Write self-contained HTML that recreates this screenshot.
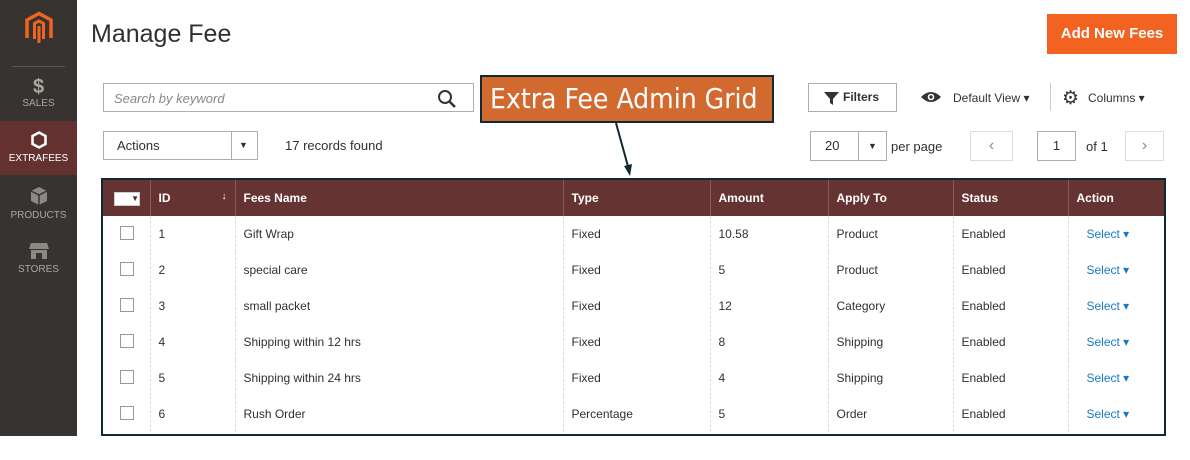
<!DOCTYPE html><html><head><style>
body{margin:0;width:1190px;height:460px;background:#fff;font-family:"Liberation Sans",sans-serif;position:relative;overflow:hidden;color:#303030}
.a{position:absolute}
.sb{left:0;top:0;width:77px;height:436px;background:#373330}
.nav{position:absolute;left:0;width:77px;text-align:center;color:#aaa6a0;font-size:10px}
.nav .i{font-size:20px;font-weight:bold;color:#aaa6a0;display:block;height:22px}
table{border-collapse:collapse;font-size:12px}
th{background:#663333;color:#fff;text-align:left;font-weight:bold;height:36px;padding:0 8px;border-left:1px solid #8a5a58}
td{height:36px;padding:0 8px;border-left:1px dashed #ddd}
tr td:first-child,tr th:first-child{border-left:none}
.cb{display:inline-block;width:12px;height:12px;border:1px solid #999;background:#fff}
.sel{color:#1979c3}
.btn{border:1px solid #adadad;background:#fff;box-sizing:border-box}
</style></head><body>
<div class="a sb"></div>
<svg class="a" style="left:24px;top:11px" width="30" height="36" viewBox="0 0 30 36"><path d="M3 27V9L15 2.5L27 9V27" fill="none" stroke="#f26322" stroke-width="3.5"/><path d="M10.5 28V12.5L15 10L19.5 12.5V28" fill="none" stroke="#f26322" stroke-width="3"/><path d="M15 15V32" stroke="#f26322" stroke-width="3"/></svg>
<div class="a" style="left:12px;top:66px;width:53px;height:1px;background:#5a5653"></div>
<div class="nav" style="top:76px"><span class="i">$</span>SALES</div>
<div class="a" style="left:0;top:121px;width:77px;height:54px;background:#633230"></div>
<div class="nav" style="top:131px;color:#fff"><svg width="16" height="18" viewBox="0 0 16 18" style="display:block;margin:0 auto 4px"><path d="M8 1.5L14.5 5V13L8 16.5L1.5 13V5Z" fill="none" stroke="#fff" stroke-width="2.5"/></svg>EXTRAFEES</div>
<div class="nav" style="top:186px"><svg width="18" height="20" viewBox="0 0 18 20" style="display:block;margin:0 auto 4px"><path d="M9 1L17 5V15L9 19L1 15V5Z" fill="#8c8883"/><path d="M1 5L9 9L17 5M9 9V19" stroke="#373330" stroke-width="1.5" fill="none"/></svg>PRODUCTS</div>
<div class="nav" style="top:242px"><svg width="22" height="18" viewBox="0 0 22 18" style="display:block;margin:0 auto 4px"><path d="M3 1H19L21 7H1Z" fill="#8c8883"/><rect x="3" y="8" width="16" height="9" fill="#8c8883"/><rect x="8" y="11" width="6" height="6" fill="#373330"/></svg>STORES</div>
<div class="a" style="left:91px;top:20px;font-size:25px;color:#303030">Manage Fee</div>
<div class="a" style="left:1047px;top:14px;width:130px;height:40px;background:#f26322;color:#fff;font-size:15px;font-weight:bold;text-align:center;line-height:40px">Add New Fees</div>
<div class="a btn" style="left:103px;top:83px;width:371px;height:29px"><span style="position:absolute;left:10px;top:7px;font-size:13px;font-style:italic;color:#888">Search by keyword</span>
<svg style="position:absolute;right:16px;top:5px" width="20" height="20" viewBox="0 0 20 20"><circle cx="8" cy="8" r="6" fill="none" stroke="#333" stroke-width="2"/><path d="M12.5 12.5L18 18" stroke="#333" stroke-width="2.5"/></svg></div>
<div class="a" style="left:480px;top:75px;width:294px;height:48px;background:#d2692f;border:2px solid #0f2a33;box-sizing:border-box;color:#fff;font-size:28px;line-height:44px;padding-left:8px;font-family:'DejaVu Sans Condensed','Liberation Sans Narrow',sans-serif">Extra Fee Admin Grid</div>
<svg class="a" style="left:605px;top:122px" width="30" height="56"><path d="M11 1L24 48" stroke="#0f2a33" stroke-width="2"/><path d="M19 44L25 54L27 42Z" fill="#0f2a33"/></svg>
<div class="a btn" style="left:808px;top:83px;width:89px;height:29px;font-size:12px;font-weight:bold;line-height:27px;padding-left:34px;color:#333"><svg style="position:absolute;left:15px;top:8px" width="15" height="13"><path d="M0 0H15L9 7V13L6 11V7Z" fill="#333"/></svg>Filters</div>
<svg class="a" style="left:920px;top:90px" width="22" height="14"><path d="M1 7Q11 -3 21 7Q11 17 1 7Z" fill="#333"/><circle cx="11" cy="7" r="3.3" fill="#fff"/><circle cx="11" cy="7" r="1.7" fill="#333"/></svg>
<div class="a" style="left:953px;top:91px;font-size:12px;color:#333">Default View ▾</div>
<div class="a" style="left:1050px;top:83px;width:1px;height:28px;background:#ccc"></div>
<div class="a" style="left:1062px;top:87px;font-size:19px;color:#333">⚙</div>
<div class="a" style="left:1088px;top:91px;font-size:12px;color:#333">Columns ▾</div>
<div class="a btn" style="left:103px;top:131px;width:155px;height:29px;font-size:13px;line-height:27px;padding-left:13px">Actions<span style="position:absolute;left:127px;top:0;width:1px;height:27px;background:#adadad"></span><span style="position:absolute;left:135px;font-size:9px">▼</span></div>
<div class="a" style="left:285px;top:138px;font-size:13px">17 records found</div>
<div class="a btn" style="left:810px;top:131px;width:77px;height:30px;font-size:13px;line-height:28px;padding-left:14px">20<span style="position:absolute;left:47px;top:0;width:1px;height:28px;background:#adadad"></span><span style="position:absolute;left:57px;font-size:9px">▼</span></div>
<div class="a" style="left:891px;top:139px;font-size:13px">per page</div>
<div class="a btn" style="left:970px;top:131px;width:43px;height:30px;border-color:#ddd;text-align:center;line-height:27px;color:#888;font-size:16px">‹</div>
<div class="a btn" style="left:1037px;top:131px;width:39px;height:30px;text-align:center;line-height:28px;font-size:13px">1</div>
<div class="a" style="left:1086px;top:139px;font-size:13px">of 1</div>
<div class="a btn" style="left:1125px;top:131px;width:39px;height:30px;border-color:#ddd;text-align:center;line-height:27px;color:#888;font-size:16px">›</div>
<div class="a" style="left:101px;top:178px;width:1065px;height:258px;border:2px solid #0f2a33;box-sizing:border-box"></div>
<table class="a" style="left:103px;top:180px;width:1061px">
<colgroup><col style="width:47px"><col style="width:85px"><col style="width:328px"><col style="width:147px"><col style="width:118px"><col style="width:125px"><col style="width:115px"><col></colgroup>
<tr><th style="padding-left:11px"><span style="display:inline-block;width:24px;height:12px;background:#fff;border:1px solid #ccc;font-size:8px;color:#333;text-align:right;line-height:12px">▼</span></th><th>ID<span style="float:right;font-weight:normal;font-size:10px">↓</span></th><th>Fees Name</th><th>Type</th><th>Amount</th><th>Apply To</th><th>Status</th><th>Action</th></tr>
<tr><td style="padding-left:17px"><span class="cb"></span></td><td>1</td><td>Gift Wrap</td><td>Fixed</td><td>10.58</td><td>Product</td><td>Enabled</td><td class="sel" style="padding-left:18px">Select ▾</td></tr>
<tr><td style="padding-left:17px"><span class="cb"></span></td><td>2</td><td>special care</td><td>Fixed</td><td>5</td><td>Product</td><td>Enabled</td><td class="sel" style="padding-left:18px">Select ▾</td></tr>
<tr><td style="padding-left:17px"><span class="cb"></span></td><td>3</td><td>small packet</td><td>Fixed</td><td>12</td><td>Category</td><td>Enabled</td><td class="sel" style="padding-left:18px">Select ▾</td></tr>
<tr><td style="padding-left:17px"><span class="cb"></span></td><td>4</td><td>Shipping within 12 hrs</td><td>Fixed</td><td>8</td><td>Shipping</td><td>Enabled</td><td class="sel" style="padding-left:18px">Select ▾</td></tr>
<tr><td style="padding-left:17px"><span class="cb"></span></td><td>5</td><td>Shipping within 24 hrs</td><td>Fixed</td><td>4</td><td>Shipping</td><td>Enabled</td><td class="sel" style="padding-left:18px">Select ▾</td></tr>
<tr><td style="padding-left:17px"><span class="cb"></span></td><td>6</td><td>Rush Order</td><td>Percentage</td><td>5</td><td>Order</td><td>Enabled</td><td class="sel" style="padding-left:18px">Select ▾</td></tr>
</table>
</body></html>
